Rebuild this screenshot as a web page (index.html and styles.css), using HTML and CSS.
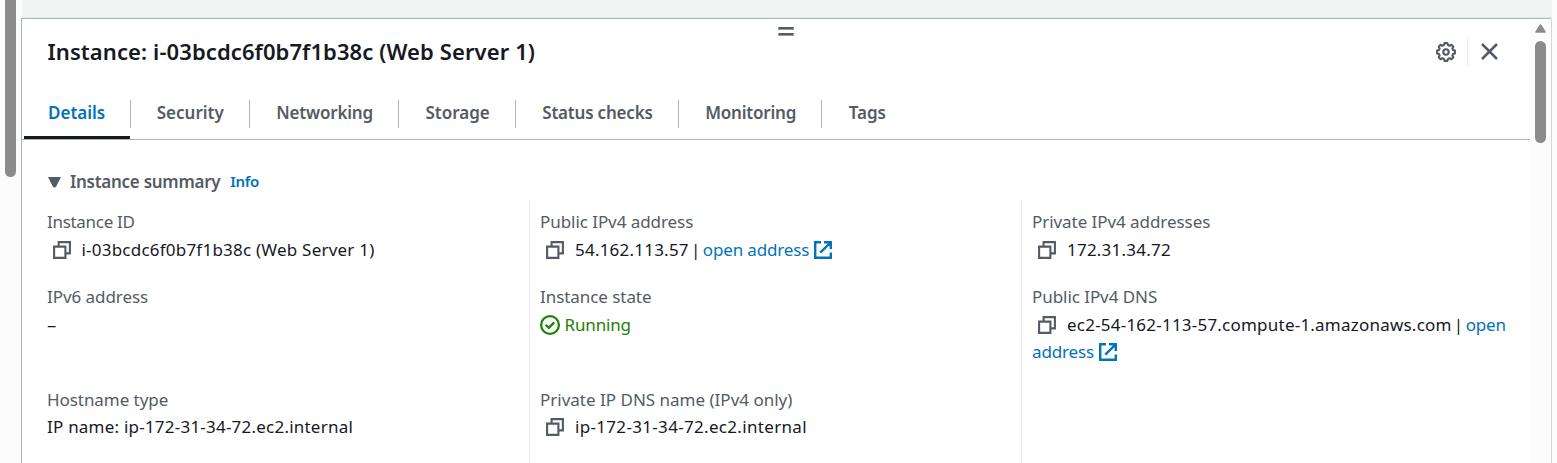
FILE: index.html
```html
<!DOCTYPE html>
<html lang="en">
<head>
<meta charset="utf-8">
<title>Instance details</title>
<link rel="stylesheet" href="styles.css">
</head>
<body>
<svg class="defs" aria-hidden="true">
  <symbol id="copy" viewBox="0 0 18 18"><path d="M1.100 5.600h11.300v11.300H1.100zM5.600 5.600V1.100h11.300v11.300H12.400" fill="none" stroke="currentColor" stroke-width="2.100"/></symbol>
  <symbol id="external" viewBox="0 0 18 18"><path d="M7 1.200H1.200v15.600h15.600V11.500M10 1.200h6.800V8M16.500 1.500 6.300 11.700" fill="none" stroke="currentColor" stroke-width="2.400"/></symbol>
</svg>
<div class="page">
  <aside class="outer-rail"><div class="outer-thumb"></div></aside>
  <main class="main">
    <div class="backdrop"></div>
    <section class="panel">
      <div class="content">
        <div class="handle"><i></i><i></i></div>
        <header class="header">
          <h1>Instance: i-03bcdc6f0b7f1b38c (Web Server 1)</h1>
          <div class="actions">
            <svg class="gear" viewBox="0 0 20 20" fill="none" stroke="currentColor" stroke-width="2.100"><path d="M8 3 8.600 1.100h2.800L12 3l1.600.7 1.800-.9 1.900 1.900-.9 1.800.6 1.500 1.900.6v2.800l-1.900.6-.6 1.500.9 1.800-1.900 1.900-1.800-.9-1.600.7-.6 1.900H8.600L8 17l-1.600-.7-1.800.9-1.900-1.900.9-1.800L3 12l-1.900-.6V8.600L3 8l.6-1.500-.9-1.800 1.900-1.900 1.800.9z" stroke-linejoin="round"/><circle cx="10" cy="10" r="2.700"/></svg>
            <span class="rule"></span>
            <svg class="close" viewBox="0 0 17 17"><path d="M1 1l15 15M16 1 1 16" stroke="currentColor" stroke-width="2.500"/></svg>
          </div>
        </header>
        <nav class="tabs">
          <a class="tab active"><span>Details</span></a>
          <a class="tab"><span>Security</span></a>
          <a class="tab tight"><span>Networking</span></a>
          <a class="tab"><span>Storage</span></a>
          <a class="tab tight"><span>Status checks</span></a>
          <a class="tab tight"><span>Monitoring</span></a>
          <a class="tab"><span>Tags</span></a>
        </nav>
        <div class="summary-head">
          <svg class="caret" viewBox="0 0 13 11"><path d="M0 0h13L8.200 9.500q-1.700 2-3.400 0z" fill="currentColor"/></svg>
          <h2>Instance summary</h2><a class="info">Info</a>
        </div>
        <div class="grid">
          <div class="cell"><div class="label narrow">Instance ID</div><div class="value"><svg class="copy"><use href="#copy"/></svg>i-03bcdc6f0b7f1b38c (Web Server 1)</div></div>
          <div class="cell"><div class="label">Public IPv4 address</div><div class="value"><svg class="copy"><use href="#copy"/></svg>54.162.113.57<span class="pipe">|</span><a class="link">open address<svg class="external"><use href="#external"/></svg></a></div></div>
          <div class="cell"><div class="label">Private IPv4 addresses</div><div class="value"><svg class="copy"><use href="#copy"/></svg>172.31.34.72</div></div>
          <div class="cell"><div class="label">IPv6 address</div><div class="value dash">–</div></div>
          <div class="cell"><div class="label">Instance state</div><div class="value running"><svg class="check" viewBox="0 0 20 20" fill="none" stroke="currentColor"><circle cx="10" cy="10" r="8.900" stroke-width="2.200"/><path d="M5.700 9.800l3.100 3.100 5.400-5.500" stroke-width="2.300"/></svg>Running</div></div>
          <div class="cell"><div class="label">Public IPv4 DNS</div><div class="value"><svg class="copy"><use href="#copy"/></svg>ec2-54-162-113-57.compute-1.amazonaws.com<span class="pipe">|</span><a class="link">open<br>address<svg class="external"><use href="#external"/></svg></a></div></div>
          <div class="cell"><div class="label">Hostname type</div><div class="value">IP name: ip-172-31-34-72.ec2.internal</div></div>
          <div class="cell"><div class="label wide">Private IP DNS name (IPv4 only)</div><div class="value wider"><svg class="copy"><use href="#copy"/></svg>ip-172-31-34-72.ec2.internal</div></div>
          <div class="cell"></div>
        </div>
      </div>
      <aside class="scrollbar">
        <svg class="up" viewBox="0 0 11 9"><path d="M5.500 1 10 8H1z" fill="currentColor" stroke="currentColor" stroke-linejoin="round" stroke-width="1.500"/></svg>
        <div class="thumb"></div>
      </aside>
    </section>
  </main>
  <aside class="edge"></aside>
</div>
</body>
</html>
```
FILE: styles.css
```css
* { box-sizing: border-box; }
body { margin: 0; overflow: hidden; background: #fff; font: 17px/27.5px "Noto Sans", sans-serif; color: #16191f; }
.defs { position: absolute; width: 0; height: 0; }
.page { display: flex; height: 463px; }
.outer-rail { width: 21px; flex: none; padding-left: 5px; background: #fcfcfc; }
.outer-thumb { width: 11px; height: 177px; background: #8b8b8b; border-radius: 0 0 5.5px 5.5px; }
.main { width: 1531px; flex: none; display: flex; flex-direction: column; }
.backdrop { height: 18px; margin-left: 1px; background: #f2f3f3; border-bottom: 1px solid #e4e8e8; }
.panel { flex: 1; min-height: 0; display: flex; border: 1px solid #aab7b8; border-right-color: #d5d5d5; border-bottom: 0; overflow: hidden; border-top-right-radius: 2px; }
.content { width: 1508px; flex: none; }
.edge { flex: 1; background: #fcfcfc; }

.handle { height: 20px; padding: 8px 0 0 756px; display: flex; flex-direction: column; gap: 3px; }
.handle i { width: 16px; height: 3px; background: #545b64; border: 1px solid #949aa1; border-top: 0; flex: none; }
.header { height: 54px; padding: 0 32px 0 25.5px; display: flex; justify-content: space-between; }
h1 { margin: -3px 0 0; font-size: 22px; line-height: 30px; font-weight: 600; letter-spacing: .1px; }
.actions { height: 29px; display: flex; align-items: center; margin-top: -2px; color: #545b64; }
.gear { width: 20px; height: 20px; }
.rule { width: 1px; height: 29px; margin: 0 13px 0 11px; background: #eaeded; }
.close { width: 17px; height: 17px; }

.tabs { height: 47px; display: flex; align-items: flex-start; border-bottom: 1px solid #aab7b8; color: #545b64; font-weight: 600; }
.tab { height: 46px; padding-top: 7px; }
.tab span { display: block; height: 28px; line-height: 26px; padding: 0 25px 0 26.5px; border-right: 1px solid #aab7b8; }
.tab.tight span { letter-spacing: -.2px; }
.tab:last-child span { border: 0; }
.tab.active { color: #0073bb; margin-left: 2px; border-bottom: 3px solid #16191f; }
.tab.active span { padding-left: 24px; margin-right: -1px; }

.summary-head { height: 56px; padding: 28px 0 0 26px; display: flex; align-items: center; color: #545b64; }
.caret { width: 13px; height: 11px; margin: 1px 9.5px 0 -.5px; }
h2 { margin: -1px 0 0; font-size: 17px; font-weight: 600; letter-spacing: -.27px; }
.info { margin-left: 10px; color: #0073bb; font-size: 15px; font-weight: 600; letter-spacing: -.3px; }

.grid { display: grid; grid-template-columns: 507px 492px 509px; margin-top: 3px; }
.cell { padding: 0 0 20px 10px; border-left: 1px solid #eaeded; }
.cell:nth-child(-n+3) { padding-top: 9px; }
.cell:nth-child(n+7) { padding-bottom: 40px; }
.cell:nth-child(3n+1) { padding-left: 25px; border-left: 0; }
.label { color: #545b64; letter-spacing: -.06px; }
.label.narrow { letter-spacing: -.3px; }
.label.wide { letter-spacing: 0; }
.value { letter-spacing: .22px; white-space: nowrap; }
.value.wider { letter-spacing: .32px; }
.value.dash { font-size: 18.5px; }
.value svg { vertical-align: -3px; }
.copy { width: 18px; height: 18px; margin: 0 11px 0 6px; color: #545b64; }
.cell:nth-child(3n+1) .copy { margin-left: 5.5px; }
.pipe { display: inline-block; width: 14px; text-align: center; }
.link { color: #0073bb; letter-spacing: -.15px; }
.external { width: 18px; height: 18px; margin-left: 5px; }
.running { color: #1d8102; letter-spacing: -.15px; }
.running .check { width: 20px; height: 20px; margin-right: 4.5px; vertical-align: -4px; }

.scrollbar { flex: 1; padding: 5px 0 0 5px; background: #fcfcfc; color: #8b8b8b; }
.up { display: block; width: 11px; height: 9px; }
.thumb { width: 11px; height: 102px; margin-top: 8px; border-radius: 6px; background: #8b8b8b; }
```
